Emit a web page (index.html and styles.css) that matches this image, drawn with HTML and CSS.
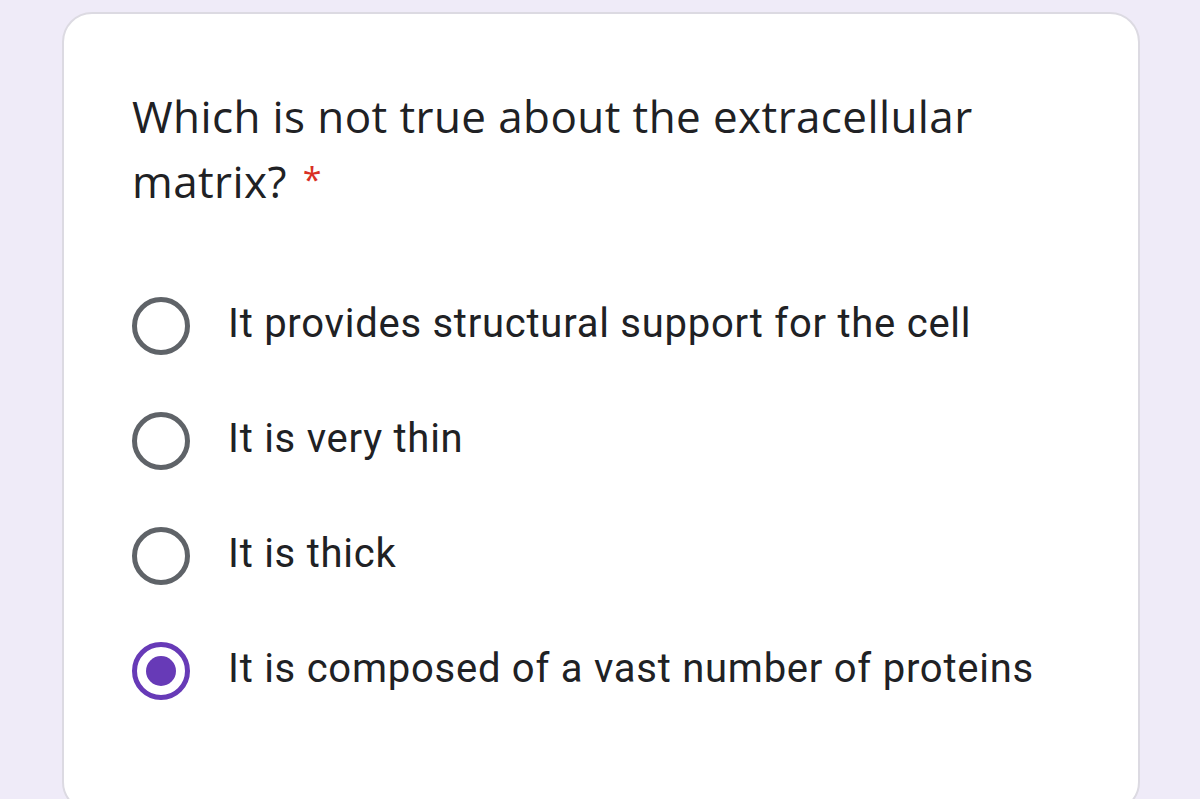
FILE: index.html
```html
<!DOCTYPE html>
<html>
<head>
<meta charset="utf-8">
<link rel="stylesheet" href="styles.css">
</head>
<body>
<div class="card">
  <div class="question">Which is not true about the extracellular matrix? <span class="req">*</span></div>
  <div class="options">
    <div class="option"><span class="radio"></span><span class="label">It provides structural support for the cell</span></div>
    <div class="option"><span class="radio"></span><span class="label">It is very thin</span></div>
    <div class="option"><span class="radio"></span><span class="label">It is thick</span></div>
    <div class="option"><span class="radio checked"></span><span class="label">It is composed of a vast number of proteins</span></div>
  </div>
</div>
</body>
</html>
```
FILE: styles.css
```css
html, body {
  margin: 0;
  padding: 0;
  background: #efebf8;
  width: 1200px;
  height: 799px;
  overflow: hidden;
}
body {
  padding: 12px 60px 0 62px;
  box-sizing: border-box;
}
.card {
  background: #ffffff;
  border: 2px solid #dcdae2;
  border-radius: 30px;
  height: 800px;
  box-sizing: border-box;
  padding: 70px 40px 0 68px;
}
.question {
  font-family: "Open Sans", "Liberation Sans", sans-serif;
  font-size: 44px;
  line-height: 65px;
  letter-spacing: 0.4px;
  color: #202124;
  max-width: 880px;
}
.req {
  display: inline-block;
  color: #d93025;
  font-size: 34px;
  line-height: 34px;
  vertical-align: 6px;
  margin-left: 4px;
}
.options {
  margin-top: 83px;
  display: flex;
  flex-direction: column;
  gap: 57px;
}
.option {
  display: flex;
  align-items: center;
  gap: 38px;
  height: 58px;
}
.radio {
  width: 58px;
  height: 58px;
  box-sizing: border-box;
  border: 5px solid #5f6368;
  border-radius: 50%;
  flex: none;
  display: flex;
  align-items: center;
  justify-content: center;
}
.radio.checked {
  border-color: #673ab7;
}
.radio.checked::after {
  content: "";
  width: 30px;
  height: 30px;
  border-radius: 50%;
  background: #673ab7;
}
.label {
  font-family: Roboto, "Liberation Sans", sans-serif;
  font-size: 40px;
  letter-spacing: 0.75px;
  color: #202124;
  white-space: nowrap;
  margin-top: -6px;
}
```
